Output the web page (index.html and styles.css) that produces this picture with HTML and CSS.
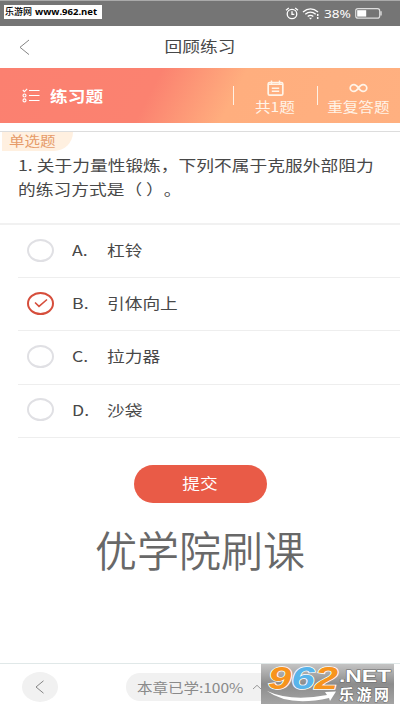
FILE: index.html
```html
<!DOCTYPE html>
<html lang="zh-CN">
<head>
<meta charset="utf-8">
<title>回顾练习</title>
<link rel="stylesheet" href="styles.css">
</head>
<body>
<div class="app">
  <header class="status">
    <div class="site"><span>乐游网</span><b>www.962.net</b></div>
    <div class="status-icons">
      <svg width="14" height="13" viewBox="0 0 14 13" fill="none" stroke="#fff" stroke-width="1.3"><ellipse cx="7" cy="7" rx="4.8" ry="4.7"/><path d="M1 3.2 3.8.9M13 3.2 10.2.9M7 4.3V7.3H9.3"/></svg>
      <svg class="wifi" width="18" height="12" viewBox="0 0 18 12" fill="none" stroke="#fff" stroke-width="1.4"><path d="M1 4Q8.5-2.2 16 4M3.3 6.3Q8.5 2 13.7 6.3M5.7 8.5Q8.5 6.2 11.3 8.5"/><path d="M7 9.7h3L8.5 11.4z" fill="#fff" stroke="none"/><path d="M15.7 6v2M15.7 9v2" stroke-width="1.5"/></svg>
      <span class="percent"><span class="wide">38%</span></span>
      <svg width="28" height="11" viewBox="0 0 28 11"><rect x=".7" y=".7" width="24" height="9.4" rx="2.2" fill="none" stroke="#ddd" stroke-width="1.2"/><rect x="2.2" y="2.2" width="9" height="6.4" fill="#fff"/><path d="M25.3 3.3h1.4v4.2h-1.4z" fill="#ddd"/></svg>
    </div>
  </header>
  <nav class="nav">
    <svg width="11" height="17" viewBox="0 0 11 17" fill="none" stroke="#858585" stroke-width="1"><path d="M10 1 1 8.3 10 15.6"/></svg>
    <h1><span class="wide mid">回顾练习</span></h1>
  </nav>
  <section class="banner">
    <svg class="list" width="18" height="15" viewBox="0 0 18 15" fill="none" stroke="#fff" stroke-width="1.1"><path d="M.8 2 2.4 3.7 5.2.8M7 2.5h10.5M7 7.5h10.5M7 12.5h10.5"/><circle cx="2.5" cy="7.5" r="1.5"/><circle cx="2.5" cy="12.4" r="1.5"/></svg>
    <h2><span class="wide">练习题</span></h2>
    <div class="stat count">
      <svg width="17" height="17" viewBox="0 0 17 17" fill="none" stroke="#fff4e8" stroke-width="1.7"><rect x="1.2" y="2.5" width="14.6" height="12.7" rx="1.5"/><path d="M1.5 4.2h14M4.5.5V4M12.5.5V4M4.8 8.3h7.4M4.8 11.2h7.4" stroke-width="1.4"/></svg>
      <span class="wide mid">共1题</span>
    </div>
    <div class="stat repeat">
      <svg width="19" height="17" viewBox="0 0 19 17" fill="none" stroke="#fff4e8" stroke-width="1.7"><path d="M9.5 8C8 5.9 6.8 4.6 5 4.6c-2.1 0-3.8 1.5-3.8 3.4s1.7 3.4 3.8 3.4C6.8 11.4 8 10.1 9.5 8s2.7-3.4 4.5-3.4c2.1 0 3.8 1.5 3.8 3.4s-1.7 3.4-3.8 3.4c-1.8 0-3-1.3-4.5-3.4z"/></svg>
      <span class="wide mid">重复答题</span>
    </div>
  </section>
  <section class="question">
    <div class="tag"><span class="wide">单选题</span></div>
    <p><span class="wide">1. 关于力量性锻炼，下列不属于克服外部阻力</span><span class="wide">的练习方式是（ ）。</span></p>
  </section>
  <ul class="options">
    <li><i class="radio"></i><span class="wide key">A.</span><span class="wide">杠铃</span></li>
    <li><i class="radio checked"><svg width="16" height="12" viewBox="0 0 16 12" fill="none" stroke="#d64e3c" stroke-width="1.6"><path d="m2 5.5 4 3.8L14 2.5"/></svg></i><span class="wide key">B.</span><span class="wide">引体向上</span></li>
    <li><i class="radio"></i><span class="wide key">C.</span><span class="wide">拉力器</span></li>
    <li><i class="radio"></i><span class="wide key">D.</span><span class="wide">沙袋</span></li>
  </ul>
  <button class="submit"><span class="wide mid">提交</span></button>
  <div class="caption">优学院刷课</div>
  <footer class="footer">
    <div class="back"><svg width="10" height="14" viewBox="0 0 10 14" fill="none" stroke="#858585"><path d="M8.5.8 1 7l7.5 6.2"/></svg></div>
    <div class="progress"><span class="wide">本章已学:100%</span><svg width="10" height="6" viewBox="0 0 10 6" fill="none" stroke="#999"><path d="M1 5 5 1.3 9 5"/></svg></div>
  </footer>
  <div class="logo">
    <svg width="133" height="40" viewBox="0 0 133 40">
      <defs><linearGradient id="sheen" x1="0" y1="0" x2="0" y2="1"><stop offset="0" stop-color="#c4c4c4"/><stop offset=".5" stop-color="#8c8c8c"/><stop offset="1" stop-color="#a4a4a4"/></linearGradient></defs>
      <rect width="133" height="40" fill="url(#sheen)"/>
      <path d="M6 27Q30 38 66 31L64 28 75 27.5 69 37 68 34Q28 43 6 27z" fill="#fff"/>
      <text class="digits" x="7" y="24.5" textLength="70" lengthAdjust="spacingAndGlyphs"><tspan fill="#f7941e">9</tspan><tspan fill="#58b4ea">6</tspan><tspan fill="#f7941e">2</tspan></text>
      <text class="net" x="78" y="18" textLength="52" lengthAdjust="spacingAndGlyphs">.NET</text>
      <text class="cn" x="78" y="35.5" textLength="50">乐游网</text>
    </svg>
  </div>
</div>
</body>
</html>
```
FILE: styles.css
```css
* { box-sizing: border-box; }
body { margin: 0; background: #fff; font-family: "Noto Sans CJK SC", sans-serif; color: #484848; text-spacing-trim: space-all; }
.app { position: relative; width: 400px; height: 710px; display: flex; flex-direction: column; overflow: hidden; font-size: 15px; }
h1, h2, p, ul { margin: 0; padding: 0; font-weight: inherit; font-size: inherit; }
svg { display: block; flex: none; }
.wide { display: inline-block; white-space: nowrap; transform: scaleX(1.18); transform-origin: left center; }
.wide.mid { transform-origin: center; }

.status { flex: none; height: 26px; background: #757575; border-top: 1px solid #aaa; display: flex; justify-content: space-between; padding: 4px 17px 0 4px; }
.site { width: 98px; height: 14px; padding-left: 1px; background: #fff; color: #000; font-size: 9px; line-height: 14px; white-space: nowrap; display: flex; gap: 3px; font-weight: 500; }
.site b { font: bold 9.5px/14px "Open Sans", sans-serif; }
.status-icons { display: flex; align-items: center; height: 17px; }
.wifi { margin-left: 3px; }
.percent { width: 27px; margin: 0 4px 0 4px; color: #fff; font: 11.5px/17px "Noto Sans", sans-serif; }

.nav { flex: none; height: 42px; display: grid; grid-template-columns: 80px 1fr 80px; align-items: center; }
.nav svg { margin: 1px 0 0 19px; }
.nav h1 { text-align: center; line-height: 38px; padding-bottom: 2px; }

.banner { flex: none; height: 55px; background: linear-gradient(117deg, #fb8070 0%, #fb8270 38%, #ffae7e 58%, #ffb080 100%); color: #fff; display: flex; align-items: center; }
.list { margin-left: 22px; }
.banner h2 { margin-left: 10px; width: 183px; font-weight: 700; }
.stat { height: 55px; padding-top: 12px; display: flex; flex-direction: column; align-items: center; font-size: 13.2px; line-height: 20px; color: #fff4e8; background: linear-gradient(#fff1e4, #fff1e4) left 18px / 1px 19px no-repeat; }
.count { width: 84px; }
.repeat { width: 83px; }

.question { flex: none; height: 94px; margin-top: 8px; border-top: 1px solid #ddd; border-bottom: 2px solid #f1f1f1; }
.tag { margin-left: 2px; padding-left: 7px; width: 71px; height: 19px; background: #fff0e0; color: #e69b69; border-radius: 0 0 22px 0; font-size: 13.2px; line-height: 18px; }
.question p { padding: 2px 0 0 18px; line-height: 24px; display: flex; flex-direction: column; align-items: flex-start; }
.question p .wide { transform: scaleX(1.182); }

.options { list-style: none; }
.options li { height: 53.2px; margin-left: 18px; padding: 0 0 2px 9px; border-bottom: 1px solid #eee; display: flex; align-items: center; }
.radio { width: 27px; height: 23px; flex: none; border: 2px solid #e0e0e4; border-radius: 50%; display: flex; align-items: center; justify-content: center; }
.radio.checked { border-color: #d64e3c; }
.key { width: 35px; margin-left: 18px; }
.options .wide { padding-bottom: 1px; }

.submit { flex: none; align-self: center; width: 133px; height: 38px; margin-top: 27px; padding: 0 0 2px; border: 0; border-radius: 19px; background: #e95b47; color: #fff; font: 15px "Noto Sans CJK SC", sans-serif; }
.caption { flex: none; margin-top: 17px; text-align: center; font-size: 42px; line-height: 58px; color: #686868; font-weight: 350; }

.footer { height: 47px; margin-top: auto; border-top: 1px solid #e0e8e8; display: flex; align-items: center; padding-left: 22px; }
.back { width: 36px; height: 30px; border-radius: 50%; background: #f1f1f1; display: flex; align-items: center; justify-content: center; }
.progress { width: 150px; height: 28px; margin-left: 68px; padding-left: 11px; border-radius: 14px; background: #f1f1f1; color: #8a8a8a; display: flex; align-items: center; font-size: 13.2px; }
.progress .wide { width: 115px; transform: scaleX(1.18); letter-spacing: -.05px; }

.logo { position: absolute; left: 261px; top: 664px; }
.digits { font: italic bold 31px "Liberation Sans", sans-serif; stroke: #fff; stroke-width: 1.5px; paint-order: stroke; }
.net { font: bold 17px "Liberation Sans", sans-serif; fill: #fff; stroke: #666; stroke-width: 1px; paint-order: stroke; }
.cn { font: 700 15px "Noto Sans CJK SC", sans-serif; fill: #fff; stroke: #666; stroke-width: 1px; paint-order: stroke; }
```
